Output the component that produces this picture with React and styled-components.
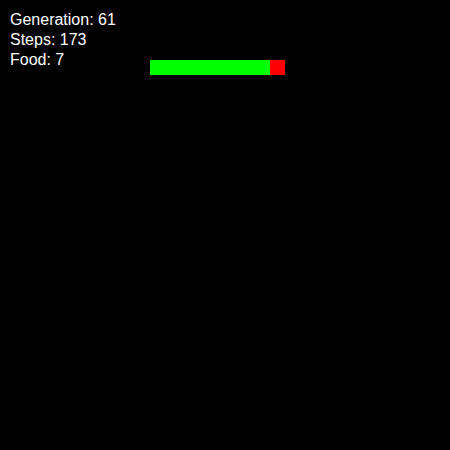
import React from "react";
import styled, { createGlobalStyle } from "styled-components";

const Global = createGlobalStyle`
  html, body { margin: 0; padding: 0; background: #000; }
  body { width: 450px; height: 450px; overflow: hidden; }
`;

const Board = styled.div`
  position: relative;
  width: 450px;
  height: 450px;
  background: #000;
  display: grid;
  grid-template-columns: repeat(30, 15px);
  grid-template-rows: repeat(30, 15px);
`;

const Cell = styled.div`
  grid-column: ${(p) => p.$x + 1};
  grid-row: ${(p) => p.$y + 1};
  background: ${(p) => (p.$food ? "#ff0000" : "#00ff00")};
`;

const Hud = styled.div`
  position: absolute;
  top: 10px;
  left: 10px;
  display: flex;
  flex-direction: column;
  font-family: "Liberation Sans", Arial, sans-serif;
  font-size: 16px;
  line-height: 20px;
  color: #fff;
`;

const Stat = styled.div`
  white-space: nowrap;
`;

const snake = [10, 11, 12, 13, 14, 15, 16, 17].map((x) => ({ x, y: 4 }));
const food = { x: 18, y: 4 };

export default function App() {
  return (
    <>
      <Global />
      <Board>
        {snake.map((c, i) => (
          <Cell key={i} $x={c.x} $y={c.y} />
        ))}
        <Cell $x={food.x} $y={food.y} $food />
        <Hud>
          <Stat>Generation: 61</Stat>
          <Stat>Steps: 173</Stat>
          <Stat>Food: 7</Stat>
        </Hud>
      </Board>
    </>
  );
}
